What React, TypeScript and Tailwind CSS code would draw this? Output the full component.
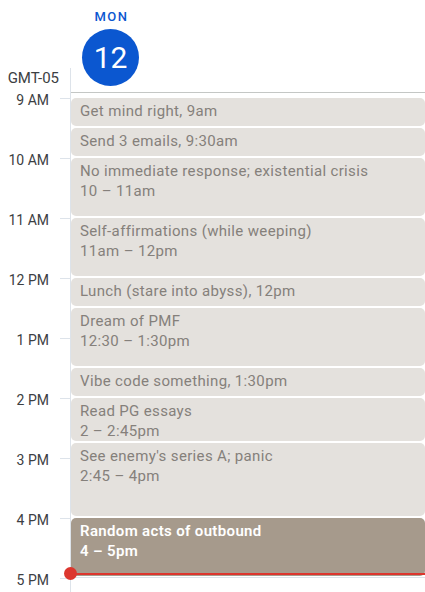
import React from "react";

type Ev = { title: string; time: string; dur: number; inline?: boolean; dark?: boolean };

const events: Ev[] = [
  { title: "Get mind right", time: "9am", dur: 30, inline: true },
  { title: "Send 3 emails", time: "9:30am", dur: 30, inline: true },
  { title: "No immediate response; existential crisis", time: "10 – 11am", dur: 60 },
  { title: "Self-affirmations (while weeping)", time: "11am – 12pm", dur: 60 },
  { title: "Lunch (stare into abyss)", time: "12pm", dur: 30, inline: true },
  { title: "Dream of PMF", time: "12:30 – 1:30pm", dur: 60 },
  { title: "Vibe code something", time: "1:30pm", dur: 30, inline: true },
  { title: "Read PG essays", time: "2 – 2:45pm", dur: 45 },
  { title: "See enemy's series A; panic", time: "2:45 – 4pm", dur: 75 },
  { title: "Random acts of outbound", time: "4 – 5pm", dur: 60, dark: true },
];

const hours = ["9 AM", "10 AM", "11 AM", "12 PM", "1 PM", "2 PM", "3 PM", "4 PM", "5 PM"];

export default function App() {
  return (
    <div
      className="w-[425px] h-[592px] overflow-hidden bg-white flex"
      style={{ fontFamily: "Roboto, 'Liberation Sans', sans-serif" }}
    >
      {/* time column */}
      <div className="w-[71px] shrink-0 flex flex-col">
        <div className="h-[68px] shrink-0" />
        <div className="h-[24px] shrink-0 border-r border-[#dde3ea] flex items-start justify-end pr-[11px]">
          <span className="text-[15px] leading-[20px] text-[#3c4043]">GMT-05</span>
        </div>
        <div className="flex-1 border-r border-[#dde3ea] flex flex-col">
          {hours.map((h) => (
            <div key={h} className="h-[60px] shrink-0 flex">
              <div className="w-[49px] text-right text-[14px] leading-[16px] text-[#3c4043]">{h}</div>
              <div className="w-[11px]" />
              <div className="flex-1 mt-[6px] h-0 border-t border-[#dde3ea]" />
            </div>
          ))}
        </div>
      </div>

      {/* day column */}
      <div className="flex-1 flex flex-col">
        <div className="h-[93px] shrink-0 border-b border-[#c4c7c5] flex flex-col items-start">
          <div className="w-[78px] flex flex-col items-center pl-[1px]">
            <div className="mt-[9px] text-[13px] leading-[16px] tracking-[1.5px] font-medium text-[#0b57d0] pl-[2px]">MON</div>
            <div className="mt-[4px] w-[57px] h-[57px] rounded-full bg-[#0b57d0] flex items-center justify-center text-white text-[30px] leading-none">
              12
            </div>
          </div>
        </div>
        <div className="relative flex-1 pt-[5px]">
          <div className="flex flex-col gap-[2px]">
            {events.map((e) => (
              <div
                key={e.title}
                className={
                  "shrink-0 rounded-[5px] px-[9px] pt-[3px] overflow-hidden tracking-[0.35px] " +
                  (e.dark ? "bg-[#a69a8c] text-white" : "bg-[#e4e1dd] text-[#85807b]")
                }
                style={{ height: e.dur - 2 }}
              >
                {e.inline ? (
                  <div className="text-[15px] leading-[20px] whitespace-nowrap">
                    <span>{e.title},</span> <span>{e.time}</span>
                  </div>
                ) : (
                  <div className={"text-[15px] leading-[20px] " + (e.dark ? "font-semibold" : "")}>
                    <div>{e.title}</div>
                    <div>{e.time}</div>
                  </div>
                )}
              </div>
            ))}
            <div className="h-0 border-t border-[#dde3ea] -mt-[1px]" />
          </div>
          {/* current time indicator */}
          <div className="absolute left-[-7px] right-0 top-[474px] flex items-center">
            <div className="w-[13px] h-[13px] rounded-full bg-[#dc362e] shrink-0" />
            <div className="flex-1 h-[2px] bg-[#dc362e] -ml-[1px]" />
          </div>
        </div>
      </div>
    </div>
  );
}
